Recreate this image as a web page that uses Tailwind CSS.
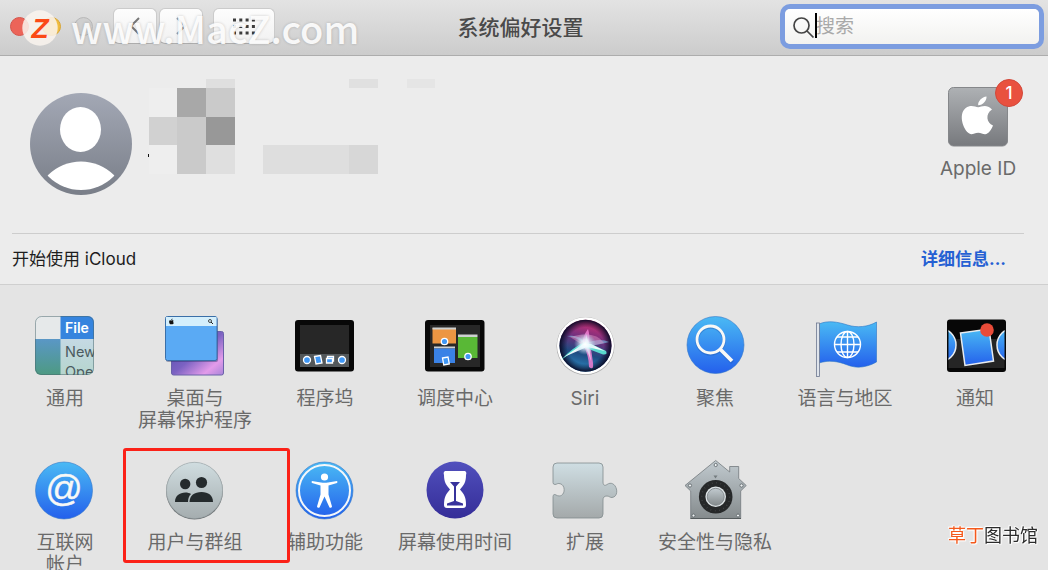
<!DOCTYPE html>
<html lang="zh-CN">
<head>
    <meta charset="UTF-8">
    <meta name="viewport" content="width=device-width, initial-scale=1.0">
    <title>系统偏好设置</title>
    <script src="https://cdn.jsdelivr.net/npm/@tailwindcss/browser@4"></script>
</head>
<body class="h-screen overflow-hidden flex flex-col bg-[#e4e4e4] font-[Inter,'Noto_Sans_CJK_SC',sans-serif] text-[#6a6a6a]">

    <!-- Title bar -->
    <header class="relative h-14 shrink-0 flex items-center justify-between pl-[10px] pr-[9px] bg-linear-to-b from-[#e3e3e3] to-[#cccccc] border-b border-[#adadad]">
        <div class="flex items-center flex-1 -mt-[3px]">
            <div class="flex gap-[13px]">
                <button aria-label="关闭" class="size-[19px] rounded-full bg-[#ec6459] border border-[#d5554b]"></button>
                <button aria-label="最小化" class="size-[19px] rounded-full bg-[#f0bc3e] border border-[#d8a534]"></button>
                <button aria-label="缩放" class="size-[19px] rounded-full bg-[#cfcfcf] border border-[#b8b8b8]"></button>
            </div>
            <div class="flex gap-[2px] ml-5">
                <button aria-label="后退" class="w-11 h-9 rounded-md bg-linear-to-b from-[#fdfdfd] to-[#f1f1f1] border border-[#cbcbcb] border-b-[#adadad] flex items-center justify-center">
                    <svg class="w-3 h-5" viewBox="0 0 12 20" fill="none" stroke="#777" stroke-width="2"><path d="M10 2 2 10l8 8"/></svg>
                </button>
                <button aria-label="前进" class="w-11 h-9 rounded-md bg-linear-to-b from-[#fdfdfd] to-[#f1f1f1] border border-[#cbcbcb] border-b-[#adadad] flex items-center justify-center">
                    <svg class="w-3 h-5" viewBox="0 0 12 20" fill="none" stroke="#999" stroke-width="2"><path d="M2 2l8 8-8 8"/></svg>
                </button>
            </div>
            <button aria-label="显示全部" class="ml-[10px] w-[62px] h-9 rounded-md bg-linear-to-b from-[#fdfdfd] to-[#f1f1f1] border border-[#cbcbcb] border-b-[#adadad] flex items-center justify-center">
                <svg class="w-6 h-[17px]" viewBox="0 0 24 17" fill="none" stroke="#3c3c3c" stroke-width="3" stroke-dasharray="3 3.300"><path d="M1 2h23M1 8.500h23M1 15h23"/></svg>
            </button>
        </div>
        <h1 class="mr-2 text-[21px] font-medium text-[#4a4a4a]">系统偏好设置</h1>
        <div class="flex-1 flex justify-end -mt-[3px]">
            <div class="relative w-[254px]">
                <svg class="absolute left-2 top-2 size-[22px]" viewBox="0 0 22 22" fill="none" stroke="#444" stroke-width="1.700"><circle cx="8.500" cy="8.500" r="7.500"/><path d="m14 14 6.500 6.500"/></svg>
                <input type="search" aria-label="搜索" placeholder="搜索" class="block w-full h-[35px] pl-[31px] pr-3 rounded-[5px] bg-linear-to-b from-white to-[#f2f2f0] ring-5 ring-[#7c9de0] text-[19px] placeholder:text-[#a9a9a9] outline-none">
                <span class="absolute left-[30px] top-1 w-[2px] h-[25px] bg-black"></span>
            </div>
        </div>

        <!-- Watermark -->
        <div class="absolute left-[22px] top-0 h-14 flex items-center pointer-events-none">
            <svg class="size-9" viewBox="0 0 36 36">
                <circle cx="18" cy="18" r="17.700" fill="#faf5ee" fill-opacity=".85"/>
                <text x="18" y="28" text-anchor="middle" font-family="Liberation Sans" font-weight="bold" font-style="italic" font-size="28" fill="#fb4a16">Z</text>
            </svg>
            <span class="ml-[13px] font-['Noto_Sans_CJK_SC'] font-medium text-[38px] leading-none text-white/90 text-shadow-[0_0_3px_rgb(0_0_0/0.2)]">www.MacZ.com</span>
        </div>
    </header>

    <!-- Account -->
    <section class="shrink-0 bg-[#ececec] border-b border-[#cfcfcf] pl-3 pr-6">
        <div class="h-[178px] flex items-start justify-between border-b border-[#cdcdcd]">
            <div class="flex">
                <svg class="size-[102px] mt-[37px] ml-[18px]" viewBox="0 0 102 102">
                    <defs>
                        <linearGradient id="avatar" x2="0" y2="1"><stop stop-color="#a3a8b5"/><stop offset="1" stop-color="#797e88"/></linearGradient>
                        <clipPath id="avatarClip"><circle cx="51" cy="51" r="46"/></clipPath>
                    </defs>
                    <circle cx="51" cy="51" r="51" fill="url(#avatar)"/>
                    <ellipse cx="50.500" cy="36.500" rx="20.500" ry="22.500" fill="#fff"/>
                    <circle cx="51" cy="115" r="46.500" fill="#fff" clip-path="url(#avatarClip)"/>
                </svg>
                <svg class="w-[290px] h-[96px] mt-[23px] ml-4" viewBox="0 0 290 96" shape-rendering="crispEdges">
                    <path fill="#dfdfdf" d="M58 0h29v9H58zM58 66h29v29H58z"/>
                    <path fill="#eeeeee" d="M1 9h28v29H1zM1 66h28v29H1z"/>
                    <path fill="#a8a8a8" d="M29 9h29v29H29z"/>
                    <path fill="#cacaca" d="M58 9h29v29H58zM29 38h29v57H29z"/>
                    <path fill="#d1d1d1" d="M1 38h28v28H1z"/>
                    <path fill="#989898" d="M58 38h29v28H58z"/>
                    <path fill="#111" d="M0 75h1v3H0z"/>
                    <path fill="#dedede" d="M115 66h86v29h-86z"/>
                    <path fill="#d7d7d7" d="M201 66h29v29h-29z"/>
                    <path fill="#e0e0e0" d="M201 0h29v9h-29z"/>
                    <path fill="#e5e5e5" d="M259 0h28v9h-28z"/>
                </svg>
            </div>
            <button class="relative mt-[31px] flex flex-col items-center w-[92px]">
                <svg class="size-[60px]" viewBox="0 0 60 60">
                    <defs><linearGradient id="apple" x2="0" y2="1"><stop stop-color="#aeb1b4"/><stop offset="1" stop-color="#77797d"/></linearGradient></defs>
                    <rect x=".5" y=".5" width="59" height="58.500" rx="5" fill="url(#apple)" stroke="#85878a"/>
                    <path fill="#fff" d="M38.500 9.500c.4 4-3.500 8.700-8.300 8.800-.5-4 3.700-8.300 8.300-8.800zM44 22.500c-7 4.200-5.500 13.500 1 16-1.500 4-4.500 8.500-7.800 8.700-2.500.1-4-1.400-7-1.400s-4.500 1.400-7 1.400c-7-1-14-19.500-5.500-26.200 5.500-4 9.500-.8 12.500-.8s8-3.800 13.800 2.300z"/>
                </svg>
                <span class="absolute -top-2 left-[63px] size-7 rounded-full bg-[#e9513f] border border-[#d2483a] text-white text-[17px] leading-[27px] font-medium">1</span>
                <span class="mt-[10px] text-[19px] leading-6">Apple ID</span>
            </button>
        </div>
        <div class="h-[50px] flex items-center justify-between pt-[2px] text-[17px] pr-[18px]">
            <span class="text-[#1d1d1d]">开始使用 iCloud</span>
            <a href="#" class="font-bold text-[#2560d3]">详细信息...</a>
        </div>
    </section>

    <!-- Preference panes -->
    <main class="grid grid-cols-8 gap-y-[29px] pt-[31px] pr-2 text-[19px] leading-[22px]">
        <button class="flex flex-col items-center gap-3 h-[115px]">
            <svg class="size-[60px] shrink-0" viewBox="0 0 60 60">
                <defs>
                    <linearGradient id="desk" x2="0" y2="1"><stop stop-color="#5a97c6"/><stop offset="1" stop-color="#4d9a80"/></linearGradient>
                    <linearGradient id="menu" x2="0" y2="1"><stop stop-color="#c5d9e4"/><stop offset="1" stop-color="#b5d5cd"/></linearGradient>
                    <clipPath id="generalClip"><rect width="59" height="59" rx="6"/></clipPath>
                </defs>
                <g clip-path="url(#generalClip)">
                    <path fill="#e6e9ea" d="M0 0h26v23H0z"/>
                    <path fill="url(#desk)" d="M0 23h26v37H0z"/>
                    <path fill="#3584de" d="M25.500 0H60v23H25.500z"/>
                    <path fill="url(#menu)" d="M25.500 23H60v37H25.500z"/>
                    <g font-family="Inter" font-size="14.500" fill="#4b5b60">
                        <text x="30" y="17" font-weight="600" font-size="14" fill="#fff">File</text>
                        <text x="30" y="41">New</text>
                        <text x="30" y="60.500">Ope</text>
                    </g>
                </g>
                <rect x=".5" y=".5" width="58" height="58" rx="6" fill="none" stroke="#49656c" stroke-opacity=".5"/>
            </svg>
            <span>通用</span>
        </button>

        <button class="flex flex-col items-center gap-3 h-[115px]">
            <svg class="size-[60px] shrink-0" viewBox="0 0 60 60">
                <defs><linearGradient id="wall" x2="1" y2="1"><stop stop-color="#4c46a5"/><stop offset=".5" stop-color="#7b62c2"/><stop offset=".8" stop-color="#e39bea"/><stop offset="1" stop-color="#a784d8"/></linearGradient></defs>
                <rect x="6.500" y="15.500" width="52" height="43.500" rx="2" fill="url(#wall)" stroke="#6a62aa"/>
                <rect x="1" y="2" width="52" height="44" rx="2" fill="#222a60" fill-opacity=".4"/>
                <rect x=".5" y=".5" width="51.500" height="44" rx="2" fill="#5aaaf4" stroke="#3a6fa8"/>
                <path fill="#d4effc" d="M1 1h50.500v9H1z"/>
                <path fill="#111" d="M4.500 4.500c1-.6 1.500 0 2 0s1.500-.5 2 .2c-.6 1-.4 1.700.3 2.200-.5 1-1 1.500-1.500 1.400-.7-.2-1-.2-1.500 0-1 .2-2.300-2.300-1.300-3.800zM6.300 4c0-1 .6-1.500 1.200-1.600C7.600 3.300 7 4 6.300 4z"/>
                <circle cx="45" cy="5" r="1.500" fill="none" stroke="#222" stroke-width=".8"/><path d="m46 6 2 2" stroke="#222"/>
            </svg>
            <span>桌面与<br>屏幕保护程序</span>
        </button>

        <button class="flex flex-col items-center gap-3 h-[115px]">
            <svg class="size-[60px] shrink-0" viewBox="0 0 60 60">
                <rect y="4" width="59" height="51.500" rx="3" fill="#080808"/>
                <path fill="#272727" d="M5 9h49v29H5z"/>
                <path fill="#53585b" d="M5 38h49v13H5z"/>
                <g fill="#3f97f5" stroke="#fff" stroke-width="1.300">
                    <circle cx="12" cy="44" r="3.500"/><circle cx="47" cy="44" r="3.500"/>
                    <path d="m19.500 40.500 6-1 1.500 7.500-6 1zM32.500 40.500h6v4.500h-6z"/>
                    <path d="M31.500 42.500h6v4.500h-6z"/>
                </g>
            </svg>
            <span>程序坞</span>
        </button>

        <button class="flex flex-col items-center gap-3 h-[115px]">
            <svg class="size-[60px] shrink-0" viewBox="0 0 60 60">
                <rect y="4" width="59.500" height="51.500" rx="3" fill="#080808"/>
                <path fill="#272727" d="M5 9h50v42H5z"/>
                <path fill="#ec9643" d="M7.500 12H31v15.500H7.500z"/><path fill="#cdd0d0" d="M7.500 11.500H31v2H7.500zM33 18.500h19.500v2.500H33zM9 30.500h21v2H9z"/>
                <path fill="#59b836" d="M33 21h19.500v21H33z"/>
                <path fill="#3a82e6" d="M9 32.500h21V47H9z"/>
                <g fill="#3f97f5" stroke="#fff" stroke-width="1.300"><circle cx="19.500" cy="25.500" r="3.200"/><circle cx="43" cy="40.500" r="3.200"/><path d="m17.500 42 5.500-1 1.300 7-5.500 1z"/></g>
            </svg>
            <span>调度中心</span>
        </button>

        <button class="flex flex-col items-center gap-3 h-[115px]">
            <svg class="size-[60px] shrink-0" viewBox="0 0 60 60">
                <defs>
                    <linearGradient id="siri" x1=".6" x2=".35" y2="1"><stop stop-color="#d52f72"/><stop offset=".35" stop-color="#73307e"/><stop offset=".65" stop-color="#1f4a80"/><stop offset="1" stop-color="#2f8fc8"/></linearGradient>
                    <radialGradient id="siriDark"><stop offset=".7" stop-color="#0b0b28" stop-opacity="0"/><stop offset="1" stop-color="#0b0b28"/></radialGradient>
                    <radialGradient id="glow"><stop stop-color="#fff"/><stop offset=".4" stop-color="#e8faff" stop-opacity=".8"/><stop offset="1" stop-color="#9de" stop-opacity="0"/></radialGradient>
                </defs>
                <circle cx="30.500" cy="30" r="29" fill="#aaa"/>
                <circle cx="30.500" cy="29.700" r="28.500" fill="#fff"/>
                <circle cx="30.500" cy="29.700" r="26" fill="url(#siri)"/>
                <circle cx="30.500" cy="29.700" r="26" fill="url(#siriDark)"/>
                <path d="M30 28Q26 18 12 20q11 2 18 8 8 3 24-2-10-5-24 2z" fill="#7cc4ea" fill-opacity=".6"/>
                <path d="M15 21q25-7 34 6l-18 4z" fill="#e994c6" fill-opacity=".45"/>
                <path d="M33 13q-6 8-5 15 6 12 6 23 5 4 4-4-1-11-4-20 1-8-1-14z" fill="#f07fd2" fill-opacity=".85"/>
                <path d="M6 44q12-13 24-18 12 4 21 9 2 4-3 3.500-10-3.500-18-7.500-11 3-24 13z" fill="#5eebd8" fill-opacity=".9"/>
                <path d="m9 41 19-13 8 0 14 7-18-4z" fill="#fff" fill-opacity=".9"/>
                <path d="M31 18l3 10 2 17-6-16z" fill="#fff" fill-opacity=".6"/>
                <circle cx="30" cy="28" r="11" fill="url(#glow)"/>
            </svg>
            <span>Siri</span>
        </button>

        <button class="flex flex-col items-center gap-3 h-[115px]">
            <svg class="size-[60px] shrink-0" viewBox="0 0 60 60">
                <defs><linearGradient id="blue" x2="0" y2="1"><stop stop-color="#4abaf4"/><stop offset="1" stop-color="#2460ec"/></linearGradient></defs>
                <circle cx="30.500" cy="29" r="28.500" fill="url(#blue)" stroke="#3477c8" stroke-width=".6"/>
                <g fill="none" stroke="#225bb0" stroke-opacity=".4" transform="translate(0 1)"><circle cx="25.500" cy="23.500" r="13.500" stroke-width="3.500"/><path d="m35 33 12.500 12.500" stroke-width="4"/></g>
                <g fill="none" stroke="#f8f8f6"><circle cx="25.500" cy="23.500" r="13.500" stroke-width="2.800"/><path d="m35 33 12 12" stroke-width="3.800"/></g>
            </svg>
            <span>聚焦</span>
        </button>

        <button class="flex flex-col items-center gap-3 h-[115px]">
            <svg class="size-[60px] shrink-0 overflow-visible" viewBox="0 0 60 60">
                <path d="M4 8c9-4 19-2 28.500 1S53 11 61.500 6v40c-9 5-19 7-29 3s-19-5-28.500-2z" fill="url(#blue)" stroke="#2874c6" stroke-width=".6"/>
                <rect x="1.500" y="7" width="3" height="53.500" fill="#dfe4eb" stroke="#6d7890" stroke-width=".8"/>
                <g fill="none" stroke="#fff" stroke-width="1.400"><circle cx="32.500" cy="28.500" r="13"/><ellipse cx="32.500" cy="28.500" rx="6.500" ry="13"/><path d="M32.500 15.500v26M19.500 28.500h26M22 21h21M22 36h21"/></g>
            </svg>
            <span>语言与地区</span>
        </button>

        <button class="flex flex-col items-center gap-3 h-[115px]">
            <svg class="size-[60px] shrink-0 overflow-visible" viewBox="0 0 60 60">
                <defs><clipPath id="noteClip"><rect x="3.500" y="5" width="56" height="50"/></clipPath></defs>
                <rect x="2" y="3.500" width="59" height="52.500" rx="3" fill="#070707"/>
                <path fill="#252525" d="M3.500 23h56v29h-56z"/>
                <g fill="url(#blue)" stroke="#e9ecef" stroke-width="1.500"><g clip-path="url(#noteClip)"><circle cx="-6" cy="29" r="17"/><circle cx="69" cy="29" r="17"/></g>
                <path d="m15.500 17 28.500-4 4.500 32-28.500 4.500z"/></g>
                <circle cx="42" cy="14" r="6.800" fill="#e94b38"/>
            </svg>
            <span>通知</span>
        </button>

        <button class="flex flex-col items-center gap-3 h-[115px]">
            <svg class="size-[60px] shrink-0" viewBox="0 0 60 60">
                <circle cx="29" cy="30.500" r="28.500" fill="url(#blue)" stroke="#3477c8" stroke-width=".6"/>
                <text x="29" y="41" text-anchor="middle" font-family="Liberation Sans" font-size="37" fill="#f8f8f6" stroke="#f8f8f6" stroke-width=".4">@</text>
            </svg>
            <span>互联网<br>帐户</span>
        </button>

        <button class="relative flex flex-col items-center gap-3 h-[115px]">
            <svg class="size-[60px] shrink-0" viewBox="0 0 60 60">
                <defs><linearGradient id="gray" x2="0" y2="1"><stop stop-color="#d0dde0"/><stop offset="1" stop-color="#a5adaf"/></linearGradient></defs>
                <circle cx="29.500" cy="31" r="28.500" fill="#707678"/>
                <circle cx="29.500" cy="30.300" r="28" fill="url(#gray)" stroke="#a4aeb0" stroke-width=".7"/>
                <g fill="#252b2d"><circle cx="20.200" cy="24" r="5.200"/><path d="M10 42c0-6 4.500-9.500 10.500-9.500 2 0 4 .5 5.500 1.500-2 2-3 4.500-3 8z"/><circle cx="36.500" cy="22.500" r="5.600"/><path d="M24.500 42c0-6.500 5-10 12-10s11.500 3.500 11.500 10z"/></g>
            </svg>
            <span>用户与群组</span>
            <span class="absolute z-10 -left-[7px] -top-3 w-[167px] h-[115px] border-3 border-[#fb2118] rounded-[3px]"></span>
        </button>

        <button class="flex flex-col items-center gap-3 h-[115px]">
            <svg class="size-[60px] shrink-0" viewBox="0 0 60 60">
                <circle cx="29.500" cy="30.500" r="28.500" fill="url(#blue)" stroke="#3477c8" stroke-width=".6"/>
                <circle cx="29.500" cy="30.500" r="25.500" fill="none" stroke="#f4f7fa" stroke-width="2"/>
                <circle cx="29.500" cy="17" r="3.600" fill="#fff"/>
                <path fill="#fff" d="m17 21 9 1.500q3.500.5 7 0l9-1.500q1 1 0 2l-8.500 2.500v9l3.500 12q-.5 2-2.500 1l-5-11-5 11q-2 1-2.500-1l3.500-12v-9L17 23q-1-1 0-2z"/>
            </svg>
            <span>辅助功能</span>
        </button>

        <button class="flex flex-col items-center gap-3 h-[115px]">
            <svg class="size-[60px] shrink-0" viewBox="0 0 60 60">
                <defs><linearGradient id="indigo" x2="0" y2="1"><stop stop-color="#5150bd"/><stop offset="1" stop-color="#352d98"/></linearGradient></defs>
                <circle cx="30" cy="30" r="28.500" fill="url(#indigo)"/>
                <path fill="#fff" d="M20 11h20q2 1 1 4c0 7-2 10-6 14.500C39 34 41 37 41 45q0 3-3 3H22q-3 0-3-3c0-8 2-11 6-15.500C21 25 19 22 19 15q-1-3 1-4z"/>
                <path fill="#37329c" d="M25 22h10l-4 4.500v14.500l7 2.500v2H22v-2l7-2.500V26.500z"/>
            </svg>
            <span>屏幕使用时间</span>
        </button>

        <button class="flex flex-col items-center gap-3 h-[115px]">
            <svg class="size-[60px] shrink-0 overflow-visible" viewBox="0 0 60 60">
                <defs><linearGradient id="puzzle" x2="0" y2="1"><stop stop-color="#cfdee3"/><stop offset="1" stop-color="#a4a9aa"/></linearGradient></defs>
                <path fill="url(#puzzle)" stroke="#818b8e" stroke-width=".8" d="M2 3h42q4 0 4 4v15c0 3.500 2 4 4 2.500 9-6 14 12 5 13-2 .2-3-1.500-5-1.500-3 0-4 1.500-4 4v14q0 4-4 4H2q-4 0-4-4V36.500c0-2 1.500-2.500 3-1.500 8 4.500 11-8 5-11-3.500-1.500-4 .5-6 .5q-2 0-2-2V7q0-4 4-4z"/>
            </svg>
            <span>扩展</span>
        </button>

        <button class="flex flex-col items-center gap-3 h-[115px]">
            <svg class="size-[60px] shrink-0 overflow-visible" viewBox="0 0 60 60">
                <defs><linearGradient id="house" x2="0" y2="1"><stop stop-color="#c1cacf"/><stop offset="1" stop-color="#858b8d"/></linearGradient></defs>
                <path fill="url(#house)" stroke="#737a7d" stroke-width=".8" d="m30.700.5 14 11.500V6.500h9v12l7.500 7-5.500 5.500V58.500h-50V31L0 25.500z"/>
                <path d="M5.500 58.500h50.500" stroke="#555b5d"/>
                <g fill="#f0f3f4" stroke="#596164" stroke-width=".8"><circle cx="30.700" cy="5" r="1.600"/><circle cx="5" cy="25.500" r="1.600"/><circle cx="56.500" cy="25.500" r="1.600"/><circle cx="8.500" cy="55.500" r="1.500"/><circle cx="53" cy="55.500" r="1.500"/></g>
                <path fill="#737b7e" d="M28.500 15.500h4l-2 3z"/>
                <circle cx="30.700" cy="36.800" r="16.800" fill="#262829"/>
                <circle cx="30.700" cy="36.800" r="14" fill="none" stroke="#45484a" stroke-width="1.500" stroke-dasharray=".7 3.700"/>
                <circle cx="30.700" cy="36.800" r="10.300" fill="#dce2e4"/>
                <circle cx="30.700" cy="36.800" r="8.500" fill="url(#house)" stroke="#777e81" stroke-width=".8"/>
            </svg>
            <span>安全性与隐私</span>
        </button>
    </main>

    <!-- Site mark -->
    <div class="fixed right-[10px] bottom-[23px] font-['Noto_Sans_CJK_SC'] text-[18px] leading-[26px] text-[#2b2b2b] text-shadow-[0_0_2px_#fff,0_0_2px_#fff,1px_1px_1px_#fff,-1px_-1px_1px_#fff]"><span class="text-[#f4591c]">草丁</span>图书馆</div>

</body>
</html>
